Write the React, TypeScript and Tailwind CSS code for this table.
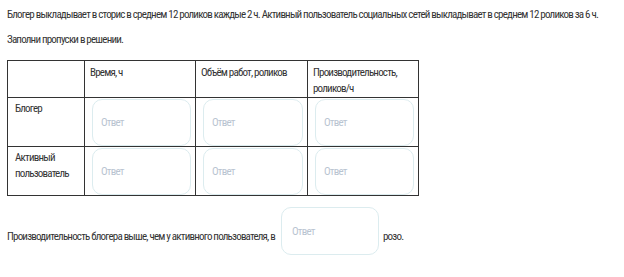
const cell = "border border-[#333] align-top";

function Answer() {
  return (
    <div className="ml-[7px] mr-[4px] mt-[1px] h-[47px] rounded-[10px] border border-[#dcecef] flex items-center pl-[8px] text-[#b9c4d1]">
      Ответ
    </div>
  );
}

export default function App() {
  const rows = ["Блогер", "Активный пользователь"];

  return (
    <main
      className="w-[624px] h-[277px] bg-white text-[#333] text-[11px] tracking-[-0.8px] leading-[16px] pl-[7px] pt-[7px]"
      style={{ fontFamily: "'Roboto Condensed', 'Liberation Sans', sans-serif" }}
    >
      <p>
        Блогер выкладывает в сторис в среднем 12 роликов каждые 2 ч. Активный пользователь социальных сетей выкладывает в среднем 12 роликов за 6 ч.
      </p>
      <p className="mt-[9px]">Заполни пропуски в решении.</p>

      <table className="mt-[12px] border-collapse table-fixed w-[411px]">
        <colgroup>
          <col className="w-[77px]" />
          <col className="w-[111px]" />
          <col className="w-[112px]" />
          <col className="w-[111px]" />
        </colgroup>
        <thead>
          <tr className="h-[37px]">
            <th className={cell} />
            <th className={`${cell} text-left font-normal px-[5px] pt-[4px]`}>Время, ч</th>
            <th className={`${cell} text-left font-normal px-[5px] pt-[4px]`}>Объём работ, роликов</th>
            <th className={`${cell} text-left font-normal px-[5px] pt-[4px]`}>Производительность, роликов/ч</th>
          </tr>
        </thead>
        <tbody>
          {rows.map((label) => (
            <tr key={label} className="h-[49px]">
              <td className={`${cell} px-[7px] pt-[3px]`}>{label}</td>
              <td className={`${cell} p-0`}>
                <Answer />
              </td>
              <td className={`${cell} p-0`}>
                <Answer />
              </td>
              <td className={`${cell} p-0`}>
                <Answer />
              </td>
            </tr>
          ))}
        </tbody>
      </table>

      <div className="mt-[11px] flex items-start">
        <span className="mt-[22px]">Производительность блогера выше, чем у активного пользователя, в</span>
        <div className="ml-[6px] w-[98px] h-[48px] rounded-[10px] border border-[#dcecef] pl-[10px] pt-[16px] text-[#b9c4d1]">
          Ответ
        </div>
        <span className="ml-[4px] mt-[22px]">розо.</span>
      </div>
    </main>
  );
}
